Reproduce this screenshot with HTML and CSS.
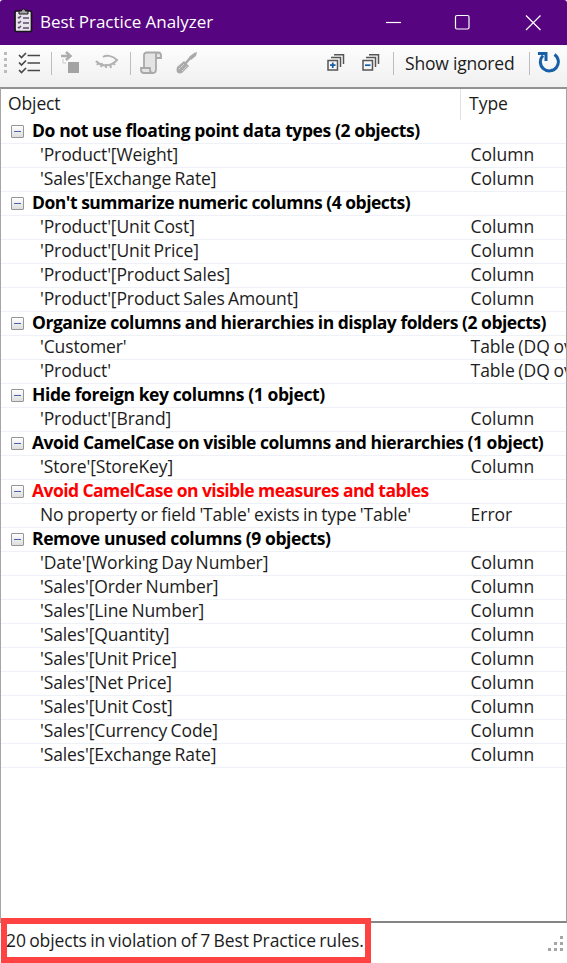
FILE: index.html
```html
<!DOCTYPE html>
<html lang="en">
<head>
<meta charset="utf-8">
<title>Best Practice Analyzer</title>
<link rel="stylesheet" href="styles.css">
</head>
<body>
<div class="window">
  <header class="titlebar">
    <svg class="app-icon" width="20" height="26" viewBox="0 0 20 26"><rect x="1" y="3" width="16.500" height="20.500" rx="1.500" fill="#e9e4ec" stroke="#171419" stroke-width="1.700"/><path d="M5 6V3h2.500a2 2 0 0 1 4 0H14v3z" fill="#aaa1ad" stroke="#171419"/><path d="m4 9 1 1 2-2m-3 6 1 1 2-2m-3 6 1 1 2-2M9 10h6m-6 5h6m-6 5h6" fill="none" stroke="#5c4a6e" stroke-width="1.500"/></svg>
    <h1 class="title">Best Practice Analyzer</h1>
    <svg class="caption" width="160" height="20" viewBox="0 0 160 20" fill="none" stroke="#fff" stroke-width="1.200"><path d="M1 10.500h15"/><rect x="70.500" y="3.500" width="13.500" height="13.500" rx="1.500"/><path d="m141 3.500 14.500 14.500m0-14.500L141 18"/></svg>
  </header>
  <div class="toolbar">
    <svg class="grip" width="4" height="24" viewBox="0 0 4 24" fill="#bcbcbc"><path d="M0 1h3v3H0zm0 6h3v3H0zm0 6h3v3H0zm0 6h3v3H0z"/></svg>
    <svg class="i-check" width="22" height="24" viewBox="0 0 22 24" fill="none" stroke="#484848" stroke-width="1.700"><path d="m1 4 2.500 2.500L8 2m-7 9.500L3.500 14 8 9.500M1 19l2.500 2.500L8 17M9.500 4.500H22M9.500 12H22M9.500 19.500H22"/></svg>
    <i class="sep s1"></i>
    <svg class="i-goto" width="20" height="24" viewBox="0 0 20 24"><path d="M7 11h11v11H7z" fill="#a3a3a3"/><path d="M0 5h10M5 1l4.500 4L5 9" fill="none" stroke="#adadad" stroke-width="2.500"/><path d="M2 8v4h3" fill="none" stroke="#c8c8c8"/></svg>
    <svg class="i-eye" width="24" height="18" viewBox="0 0 24 18" fill="none" stroke="#b2b2b2" stroke-width="2"><path d="M1 7c5 6 15 6 21-1C17 1 11 1 8 3m-4 5-2 3m5-2-1 4m5-3v4m4-4 1 4m2-6 2 3"/></svg>
    <i class="sep s2"></i>
    <svg class="i-scroll" width="22" height="24" viewBox="0 0 22 24" fill="#e4e4e4" stroke="#a9a9a9" stroke-width="1.800"><path d="M4 16V4q0-2.500 3-2.500h11q3 0 3 3V7h-5v11q0 4-3 4H4q-3 0-3-3v-2h9v2q0 3 3 3M16 7V4q0-2.500 2-2.500"/></svg>
    <svg class="i-driver" width="23" height="24" viewBox="0 0 23 24"><path d="m10 13 7-8" stroke="#aaa" stroke-width="2.500"/><path d="m14 6 5-4 3-1-1 4-5 4z" fill="#aaa"/><path d="m2 16 7-6 5 5-7 7q-7 2-5-6z" fill="#aaa"/><path d="m4 18 5-5m-2 7 5-5" stroke="#e0e0e0" stroke-dasharray="2 1"/></svg>
    <span class="spacer"></span>
    <svg class="i-stack" width="18" height="18" viewBox="0 0 18 18" fill="none" stroke="#555" stroke-width="1.500"><path d="M1 6.500h9.500V16H1zM4 3.500h9.500V13M7 .8h9.500V10"/><path d="M3 11.200h5.500M5.750 8.500V14" stroke="#165da6" stroke-width="1.700"/></svg>
    <svg class="i-stack second" width="18" height="18" viewBox="0 0 18 18" fill="none" stroke="#555" stroke-width="1.500"><path d="M1 6.500h9.500V16H1zM4 3.500h9.500V13M7 .8h9.500V10"/><path d="M3 11.200h5.500" stroke="#165da6" stroke-width="1.700"/></svg>
    <i class="sep s3"></i>
    <span class="show">Show ignored</span>
    <i class="sep s4"></i>
    <svg class="i-refresh" width="22" height="24" viewBox="0 0 22 24" fill="none" stroke="#1760a7" stroke-width="3"><path d="M16.500 3.500A9 9 0 1 1 5 4.500"/><path d="M0 2.500h8V10" stroke-width="3"/></svg>
  </div>
  <main class="list">
    <div class="row head"><span class="object">Object</span><span class="type">Type</span></div>
    <div class="row group loose"><i class="toggle"></i><b>Do not use floating point data types (2 objects)</b></div>
    <div class="row"><span class="object">'Product'[Weight]</span><span class="type">Column</span></div>
    <div class="row"><span class="object">'Sales'[Exchange Rate]</span><span class="type">Column</span></div>
    <div class="row group"><i class="toggle"></i><b>Don't summarize numeric columns (4 objects)</b></div>
    <div class="row"><span class="object">'Product'[Unit Cost]</span><span class="type">Column</span></div>
    <div class="row"><span class="object">'Product'[Unit Price]</span><span class="type">Column</span></div>
    <div class="row"><span class="object">'Product'[Product Sales]</span><span class="type">Column</span></div>
    <div class="row"><span class="object">'Product'[Product Sales Amount]</span><span class="type">Column</span></div>
    <div class="row group"><i class="toggle"></i><b>Organize columns and hierarchies in display folders (2 objects)</b></div>
    <div class="row"><span class="object">'Customer'</span><span class="type">Table (DQ ov</span></div>
    <div class="row"><span class="object">'Product'</span><span class="type">Table (DQ ov</span></div>
    <div class="row group loose"><i class="toggle"></i><b>Hide foreign key columns (1 object)</b></div>
    <div class="row"><span class="object">'Product'[Brand]</span><span class="type">Column</span></div>
    <div class="row group"><i class="toggle"></i><b>Avoid CamelCase on visible columns and hierarchies (1 object)</b></div>
    <div class="row"><span class="object">'Store'[StoreKey]</span><span class="type">Column</span></div>
    <div class="row group error"><i class="toggle"></i><b>Avoid CamelCase on visible measures and tables</b></div>
    <div class="row"><span class="object">No property or field 'Table' exists in type 'Table'</span><span class="type">Error</span></div>
    <div class="row group loose"><i class="toggle"></i><b>Remove unused columns (9 objects)</b></div>
    <div class="row"><span class="object">'Date'[Working Day Number]</span><span class="type">Column</span></div>
    <div class="row"><span class="object">'Sales'[Order Number]</span><span class="type">Column</span></div>
    <div class="row"><span class="object">'Sales'[Line Number]</span><span class="type">Column</span></div>
    <div class="row"><span class="object">'Sales'[Quantity]</span><span class="type">Column</span></div>
    <div class="row"><span class="object">'Sales'[Unit Price]</span><span class="type">Column</span></div>
    <div class="row"><span class="object">'Sales'[Net Price]</span><span class="type">Column</span></div>
    <div class="row"><span class="object">'Sales'[Unit Cost]</span><span class="type">Column</span></div>
    <div class="row"><span class="object">'Sales'[Currency Code]</span><span class="type">Column</span></div>
    <div class="row"><span class="object">'Sales'[Exchange Rate]</span><span class="type">Column</span></div>
  </main>
  <footer class="status">
    <div class="message">20 objects in violation of 7 Best Practice rules.</div>
    <svg class="resize" width="18" height="18" viewBox="0 0 18 18" fill="#a5a5a5"><path d="M13 0h3v3h-3zM7 6h3v3H7zm6 0h3v3h-3zM1 12h3v3H1zm6 0h3v3H7zm6 0h3v3h-3z"/></svg>
  </footer>
</div>
</body>
</html>
```
FILE: styles.css
```css
* { box-sizing: border-box; }
body { margin: 0; background: #fff; color: #1c1c1c; font: 17.5px/24px "Open Sans", "Noto Sans", sans-serif; }
svg { display: block; flex: none; }
.window { width: 567px; height: 963px; display: flex; flex-direction: column; overflow: hidden; }
.titlebar { height: 45px; flex: none; display: flex; align-items: center; padding: 0 25px 2px 14px; background: #56047f; color: #fff; border-radius: 3px 3px 0 0; }
.app-icon { margin-top: -2px; }
.title { margin: 0 0 0 6px; font-size: 17px; font-weight: 400; letter-spacing: -.05px; white-space: nowrap; }
.caption { margin-left: auto; margin-right: -3px; }
.toolbar { height: 42px; flex: none; display: flex; align-items: center; padding: 0 7px 6px 4px; background: linear-gradient(#fdfdfd, #f0f0f0); }
.i-check { margin-left: 10px; }
.sep { width: 1px; height: 23px; background: #bdbdbd; flex: none; }
.s1 { margin-left: 11px; }
.i-goto { margin-left: 9px; }
.i-eye { margin-left: 14px; }
.s2 { margin-left: 11px; }
.i-scroll { margin-left: 9px; }
.i-driver { margin-left: 13px; }
.spacer { flex: 1; }
.second { margin-left: 17px; }
.s3 { margin-left: 13px; }
.show { margin-left: 11px; width: 124px; white-space: nowrap; letter-spacing: -.2px; }
.i-refresh { margin-left: 8px; }
.list { height: 836px; flex: none; border: 1px solid #a5a5a5; border-top: 2px solid #929292; border-bottom: 2px solid #858585; overflow: hidden; }
.row { height: 24px; display: flex; border-bottom: 1px solid #eef1f8; white-space: nowrap; line-height: 21px; padding-left: 39px; letter-spacing: -.12px; word-spacing: -1px; }
.object { width: 430px; flex: none; }
.type { flex: none; letter-spacing: 0; padding-left: .5px; }
.head { height: 31px; padding-left: 7px; border: 0; line-height: 29px; }
.head .object { width: 453px; border-right: 1px solid #e2e2e2; }
.head .type { padding-left: 8px; }
.group { padding-left: 10px; color: #000; letter-spacing: -.49px; word-spacing: 0; }
.loose { letter-spacing: -.4px; }
.group b { margin-left: 8px; }
.error { color: #f00; letter-spacing: -.56px; }
.toggle { width: 13px; height: 13px; flex: none; margin-top: 5px; border: 1px solid #969696; border-radius: 1px; background: linear-gradient(#4865ac, #4865ac) center / 7px 1px no-repeat, linear-gradient(#fff, #ddd); }
.status { height: 40px; flex: none; display: flex; justify-content: space-between; padding-left: 1px; }
.message { width: 370px; height: 45px; margin-top: -5px; border: 6px solid #ff4242; background: #fff; white-space: nowrap; line-height: 33px; letter-spacing: -.12px; word-spacing: -1px; text-indent: -1px; }
.resize { margin-top: 13px; margin-right: 2px; }
```
